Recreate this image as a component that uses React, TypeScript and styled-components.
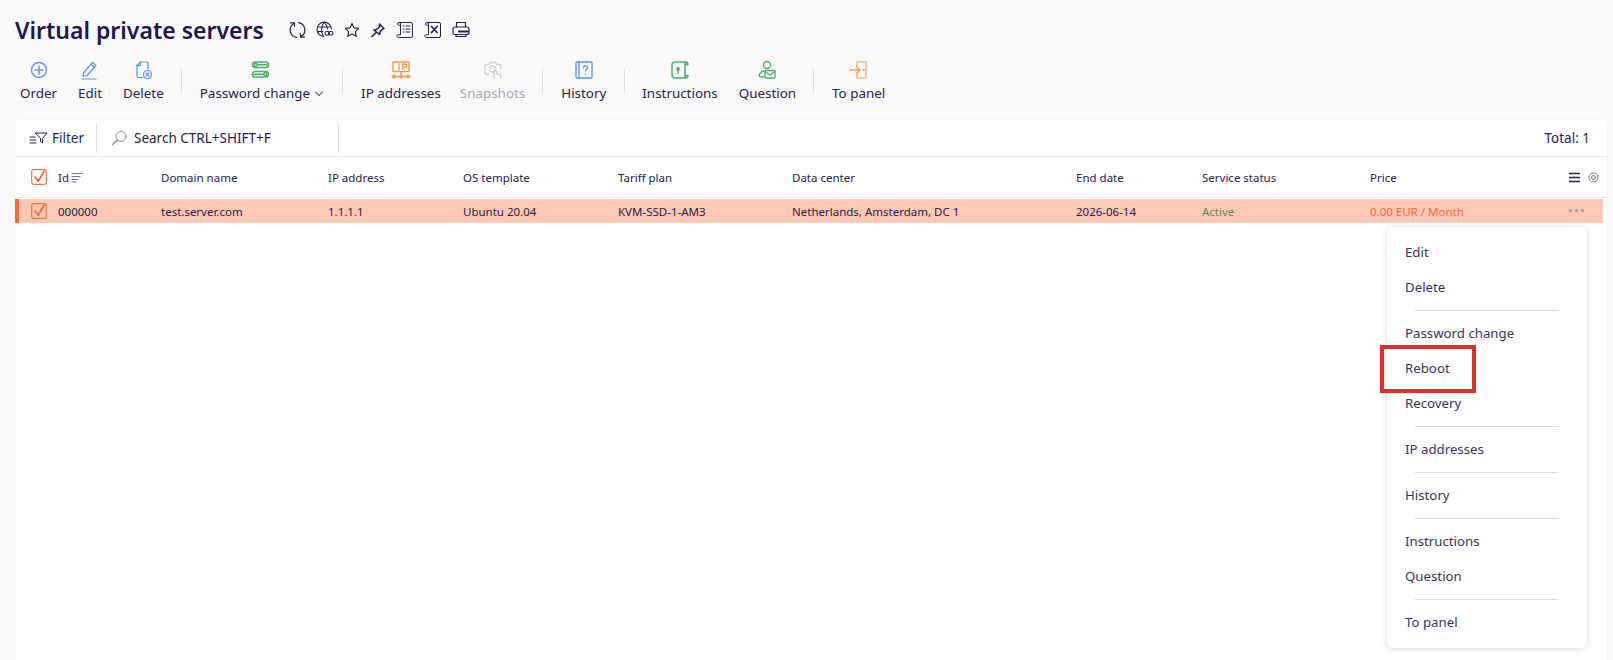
import styled, { createGlobalStyle } from "styled-components";
import type { ReactNode } from "react";

const GlobalStyle = createGlobalStyle`
    html, body { margin: 0; padding: 0; height: 100%; overflow: hidden; background: #fafafb; }
    body { font-family: "Noto Sans", "Open Sans", sans-serif; color: #2a2552; }
`;

const NAVY = "#26214f";
const BLUE = "#5b93f0";
const GREEN = "#4caf6d";
const ORANGE = "#f79a55";
const GREY = "#cfcfd4";

const Page = styled.div`
    position: relative; width: 1613px; height: 660px; overflow: hidden; padding: 15px 6px 0 15px; box-sizing: border-box;
`;
const TitleRow = styled.div`
    display: flex; align-items: center; height: 29px;
`;
const Title = styled.h1`
    margin: 0 24px 0 0; font-size: 23px; font-weight: 600; color: #1d1650; white-space: nowrap; width: 250px;
`;
const TitleIcons = styled.div`
    display: flex; gap: 10px; align-items: center;
`;
const Toolbar = styled.div`
    display: flex; align-items: flex-start; height: 62px; margin-top: 14px;
`;
const ToolGroup = styled.div<{ $gap?: number; $pad?: string }>`
    display: flex; gap: ${p => p.$gap ?? 20}px; padding: ${p => p.$pad ?? "0 17px 0 18px"}; border-left: 1px solid #dcdce0; height: 24px; margin-top: 11px; align-items: flex-start;
    &:first-child { border-left: 0; }
`;
const Tool = styled.div<{ $off?: boolean }>`
    display: flex; flex-direction: column; align-items: center; height: 48px; margin-top: -11px; gap: 4px;
    font-size: 13.4px; white-space: nowrap; color: ${p => (p.$off ? "#a8a8ae" : NAVY)};
`;
const ToolIcon = styled.span`
    display: flex; height: 20px; margin-top: 2px;
`;
const Chevron = styled.span`
    display: inline-block; width: 5px; height: 5px; margin: 0 1px 3px 6px; border-right: 1px solid #55516f; border-bottom: 1px solid #55516f; transform: rotate(45deg);
`;
const Panel = styled.div`
    background: #fff; border-radius: 4px 4px 0 0; height: 540px; box-shadow: 0 0 2px rgba(30, 30, 60, 0.08);
`;
const FilterBar = styled.div`
    display: flex; align-items: center; height: 36px; border-bottom: 1px solid #ececef; font-size: 13.5px; padding-right: 17px;
`;
const FilterButton = styled.div`
    display: flex; align-items: center; gap: 4px; padding-left: 14px; width: 82px; height: 30px; box-sizing: border-box; border-right: 1px solid #dfdfe3;
`;
const Search = styled.div`
    display: flex; align-items: center; gap: 7px; padding-left: 14px; width: 242px; height: 30px; box-sizing: border-box; border-right: 1px solid #dfdfe3; color: ${NAVY};
`;
const Total = styled.div`
    margin-left: auto;
`;
const HeadRow = styled.div`
    display: grid; grid-template-columns: 43px 103px 167px 135px 155px 174px 284px 126px 168px 1fr 80px; align-items: center;
    height: 41px; box-sizing: border-box; padding-top: 1px; border-bottom: 1px solid #e8e8ec; font-size: 11.5px; color: ${NAVY};
`;
const DataRow = styled.div`
    display: grid; grid-template-columns: 39px 103px 167px 135px 155px 174px 284px 126px 168px 1fr 80px; align-items: center;
    height: 24px; box-sizing: border-box; margin: 1px 4px 0 0; background: #ffc9b3; border-left: 4px solid #f9683a; font-size: 11.5px; color: ${NAVY};
`;
const CheckCell = styled.div<{ $left: number; $up: number }>`
    display: flex; padding-left: ${p => p.$left}px; margin-top: -${p => p.$up}px;
`;
const IdHead = styled.div`
    display: flex; align-items: center; gap: 2px;
`;
const Cell = styled.div<{ $color?: string }>`
    color: ${p => p.$color ?? "inherit"}; white-space: nowrap;
`;
const HeadEnd = styled.div`
    display: flex; justify-content: flex-end; align-items: center; gap: 8px; padding-right: 8px;
`;
const Dots = styled.div`
    display: flex; justify-content: flex-end; align-items: center; gap: 3px; padding-right: 19px; margin-top: -2px;
`;
const Dot = styled.i`
    width: 3px; height: 3px; border-radius: 50%; background: #a09c9e;
`;
const Menu = styled.div`
    position: absolute; left: 1387px; top: 227px; width: 200px; height: 421px; box-sizing: border-box; padding: 8px 0 0;
    background: #fff; border-radius: 6px; box-shadow: 0 1px 6px rgba(40, 40, 80, 0.16);
`;
const MenuItem = styled.div<{ $marked?: boolean }>`
    position: relative; height: 35px; line-height: 35px; padding-left: 18px; font-size: 13.25px; color: #39345f;
    ${p => p.$marked && `&::after { content: ""; position: absolute; left: -7px; top: -6px; width: 96px; height: 48px; box-sizing: border-box; border: 4px solid #e0302a; }`}
`;
const MenuLine = styled.div`
    height: 1px; margin: 5px 28px; background: #dcdce0;
`;

const Ico = ({ w = 20, h = 20, c = NAVY, sw = 1.3, children }: { w?: number; h?: number; c?: string; sw?: number; children: ReactNode }) => (
    <svg width={w} height={h} viewBox={`0 0 ${w} ${h}`} fill="none" stroke={c} strokeWidth={sw} strokeLinecap="round" strokeLinejoin="round">{children}</svg>
);

const CheckBox = () => (
    <svg width="16" height="16" viewBox="0 0 16 16" fill="none">
        <rect x="0.7" y="0.7" width="14.6" height="14.6" rx="2" stroke="#f4764a" strokeWidth="1.2" />
        <path d="M3.5 7.5 7.3 12 13.5 1.8" stroke="#f9683a" strokeWidth="1.8" />
    </svg>
);

const Scroll = ({ children }: { children: ReactNode }) => (
    <Ico w={18} h={18} sw={1}>
        <path d="M4 1.5h11a1.5 1.5 0 0 1 1.5 1.500V15a1.500 1.500 0 0 1-1.500 1.500H2.500a1.500 1.500 0 0 1-1-2.700h3V3a1.500 1.500 0 0 0-3 0c0 1 .8 1.300 2.500 1.300" />
        {children}
    </Ico>
);

const columns = ["Domain name", "IP address", "OS template", "Tariff plan", "Data center", "End date", "Service status", "Price"];
const row = ["test.server.com", "1.1.1.1", "Ubuntu 20.04", "KVM-SSD-1-AM3", "Netherlands, Amsterdam, DC 1", "2026-06-14"];
const menuGroups = [
    ["Edit", "Delete"],
    ["Password change", "Reboot", "Recovery"],
    ["IP addresses"],
    ["History"],
    ["Instructions", "Question"],
    ["To panel"],
];

export default function App() {
    return (
        <Page>
            <GlobalStyle />
            <TitleRow>
                <Title>Virtual private servers</Title>
                <TitleIcons>
                    <Ico w={17} h={18} sw={1.2}><path d="M5.500 2.200A7.500 7.500 0 0 0 7.500 16.400" /><path d="M11.500 15.800A7.500 7.500 0 0 0 9.500 1.600" /><path d="M1.500 1.800h4v3.700M15.500 16.200h-4v-3.700" /></Ico>
                    <Ico w={18} h={18} sw={1.1}><path d="M7.500 15.500A7.200 7.200 0 1 1 15.400 8" /><path d="M1.500 6h13M1.500 10.500h5.500M8.200 1C4.800 5 4.800 11 7.500 15.500M8.200 1c2.500 3 3.200 5.500 3.200 7" /><rect x="9" y="10.500" width="4.500" height="3.500" rx="1.700" /><rect x="12.500" y="10.500" width="4.500" height="3.500" rx="1.700" /></Ico>
                    <Ico w={16} h={16} sw={1.2}><path d="m8 1.500 2 4.300 4.700.6-3.400 3.200.9 4.700L8 12l-4.200 2.300.9-4.700L1.300 6.400 6 5.800z" /></Ico>
                    <Ico w={16} h={16} sw={1.6}><path d="m9.500 2 4.500 4.500-1.500.5-2.500 3-.5 2.500L4 8l2.500-.5 3-2.500zM6 10.500l-4 4" /></Ico>
                    <Scroll><path d="M7 5h1M10 5h4M7 8h1M10 8h4M7 11h1M10 11h4" /></Scroll>
                    <Scroll><path d="m7.500 5.500 5.500 6m0-6-5.500 6" strokeWidth="1.800" /></Scroll>
                    <Ico w={18} h={17} sw={1.2}><rect x="1" y="6" width="16" height="7.500" rx="2" /><path d="M4.500 6V1.500h9V6M4 13.500v2h10v-2" /><path d="M7 10.500h9" strokeWidth="2.200" /></Ico>
                </TitleIcons>
            </TitleRow>
            <Toolbar>
                <ToolGroup $gap={21} $pad="0 17px 0 5px">
                    <Tool><ToolIcon><Ico c={BLUE} sw={1.4}><circle cx="10" cy="10" r="7.500" /><path d="M10 6v8M6 10h8" /></Ico></ToolIcon>Order</Tool>
                    <Tool><ToolIcon><Ico c={BLUE} sw={1.2}><path d="M3.500 13 12.500 2.500l3.500 3L7 15.500l-4 1z" /><path d="M11 4.300l3.500 3M2 19h14" /></Ico></ToolIcon>Edit</Tool>
                    <Tool><ToolIcon><Ico c={BLUE} sw={1.2}><path d="M10 17.500H5.500A1.500 1.500 0 0 1 4 16V5.500L7.500 2h6A1.500 1.500 0 0 1 15 3.500V9" /><path d="M7.500 2v3.500H4" /><circle cx="14.500" cy="14.500" r="4" /><path d="m13 13 3 3m0-3-3 3" /></Ico></ToolIcon>Delete</Tool>
                </ToolGroup>
                <ToolGroup $pad="0 19px 0 18px">
                    <Tool>
                        <ToolIcon>
                            <Ico c={GREEN} sw={1.6}><rect x="1.500" y="2" width="16" height="5.500" rx="2.700" /><rect x="1.500" y="11.500" width="16" height="5.500" rx="2.700" /><circle cx="4.800" cy="4.700" r="1.500" /><circle cx="14.200" cy="14.200" r="1.500" /><path d="M7 4.700h9M3 14.200h9" /></Ico>
                        </ToolIcon>
                        <span>Password change<Chevron /></span>
                    </Tool>
                </ToolGroup>
                <ToolGroup $gap={19}>
                    <Tool>
                        <ToolIcon>
                            <Ico c={ORANGE} sw={1.4}><path d="M2 2h16v9.500H2zM8 4v5.500M11.500 9.500V4h2.500a1.700 1.700 0 0 1 0 3.500h-2.500M1 16.500h18M10 11.500v5" /><circle cx="3" cy="16.500" r="1.200" fill={ORANGE} /><circle cx="10" cy="16.500" r="1.200" fill={ORANGE} /><circle cx="17" cy="16.500" r="1.200" fill={ORANGE} /></Ico>
                        </ToolIcon>
                        IP addresses
                    </Tool>
                    <Tool $off>
                        <ToolIcon>
                            <Ico c={GREY} sw={1.3}><path d="M6 14H3.500A1.500 1.500 0 0 1 2 12.500V6a1.500 1.500 0 0 1 1.500-1.500H6l1.500-2h5l1.500 2h2.500A1.500 1.500 0 0 1 18 6v3" /><circle cx="9.500" cy="9" r="3" /><path d="M11 18.500V11.500a1.200 1.200 0 0 1 2.400 0v2l3.500.8c.8.200 1.100.8 1 1.500l-.4 2.700" /></Ico>
                        </ToolIcon>
                        Snapshots
                    </Tool>
                </ToolGroup>
                <ToolGroup $pad="0 18px 0 18px">
                    <Tool>
                        <ToolIcon>
                            <Ico c={BLUE} sw={1.3}><rect x="2" y="2" width="16" height="16" rx="1" /><path d="M5 2v16" /><path d="M9.500 8c0-3 4-3 4-.5 0 1.500-2 1.500-2 3.500M11.500 14v.2" /></Ico>
                        </ToolIcon>
                        History
                    </Tool>
                </ToolGroup>
                <ToolGroup $gap={21} $pad="0 17px 0 17px">
                    <Tool>
                        <ToolIcon>
                            <Ico c={GREEN} sw={1.5}><path d="M15 2H5a3 3 0 0 0-3 3v10a3 3 0 0 0 3 3h10M15 2v16M15 2c2 0 3 .8 3 2.500h-3M15 18c2 0 3-.8 3-2.500h-3" /><circle cx="8" cy="9" r="1.200" fill={GREEN} /><path d="M8 9v4.500" /></Ico>
                        </ToolIcon>
                        Instructions
                    </Tool>
                    <Tool>
                        <ToolIcon>
                            <Ico c={GREEN} sw={1.4}><circle cx="10" cy="5" r="3.500" /><path d="M7 17H4a2 2 0 0 1-1-3.500c1-1.500 2.500-2.500 4-2.500" /><rect x="8" y="10.500" width="10" height="7.500" rx="1" /><path d="m8 11.500 5 3.500 5-3.500" /></Ico>
                        </ToolIcon>
                        Question
                    </Tool>
                </ToolGroup>
                <ToolGroup $pad="0 0 0 18px">
                    <Tool>
                        <ToolIcon>
                            <Ico c={ORANGE} sw={1.3}><path d="M8 7V2h9v16H8v-5" stroke="#fbb98c" strokeWidth="1.700" /><path d="M1 10h10M8 7l3 3-3 3M14 10h1.500" /></Ico>
                        </ToolIcon>
                        To panel
                    </Tool>
                </ToolGroup>
            </Toolbar>
            <Panel>
                <FilterBar>
                    <FilterButton>
                        <Ico w={19} h={14} sw={1}><path d="M6.500 2H18l-4.500 5.500V12l-2-1.500v-3zM1 6h5M1 9h6M1 12h6" /></Ico>
                        Filter
                    </FilterButton>
                    <Search>
                        <Ico w={16} h={16} c="#8b8b92" sw={1}><circle cx="10" cy="6.500" r="5" /><path d="M6.300 10 1.500 14.500" strokeWidth="1.400" /></Ico>
                        Search CTRL+SHIFT+F
                    </Search>
                    <Total>Total: 1</Total>
                </FilterBar>
                <HeadRow>
                    <CheckCell $left={16} $up={2}><CheckBox /></CheckCell>
                    <IdHead>Id<Ico w={12} h={11} c="#6c6885" sw={0.9}><path d="M1 1.500h10M1 4.500h8M1 7.500h6M1 10h4" /></Ico></IdHead>
                    {columns.map(c => <Cell key={c}>{c}</Cell>)}
                    <HeadEnd>
                        <Ico w={11} h={11} sw={1.6}><path d="M.5 1.500h10M.5 5.500h10M.5 9.500h10" /></Ico>
                        <Ico w={11} h={11} c="#77748c" sw={1}><circle cx="5.500" cy="5.500" r="4.500" strokeDasharray="1.500 .8" /><circle cx="5.500" cy="5.500" r="2" /></Ico>
                    </HeadEnd>
                </HeadRow>
                <DataRow>
                    <CheckCell $left={12} $up={1}><CheckBox /></CheckCell>
                    <Cell>000000</Cell>
                    {row.map(c => <Cell key={c}>{c}</Cell>)}
                    <Cell $color="#5f8f4f">Active</Cell>
                    <Cell $color="#f9683a">0.00 EUR / Month</Cell>
                    <Dots><Dot /><Dot /><Dot /></Dots>
                </DataRow>
            </Panel>
            <Menu>
                {menuGroups.map((group, i) => (
                    <div key={group[0]}>
                        {i > 0 && <MenuLine />}
                        {group.map(label => <MenuItem key={label} $marked={label === "Reboot"}>{label}</MenuItem>)}
                    </div>
                ))}
            </Menu>
        </Page>
    );
}
